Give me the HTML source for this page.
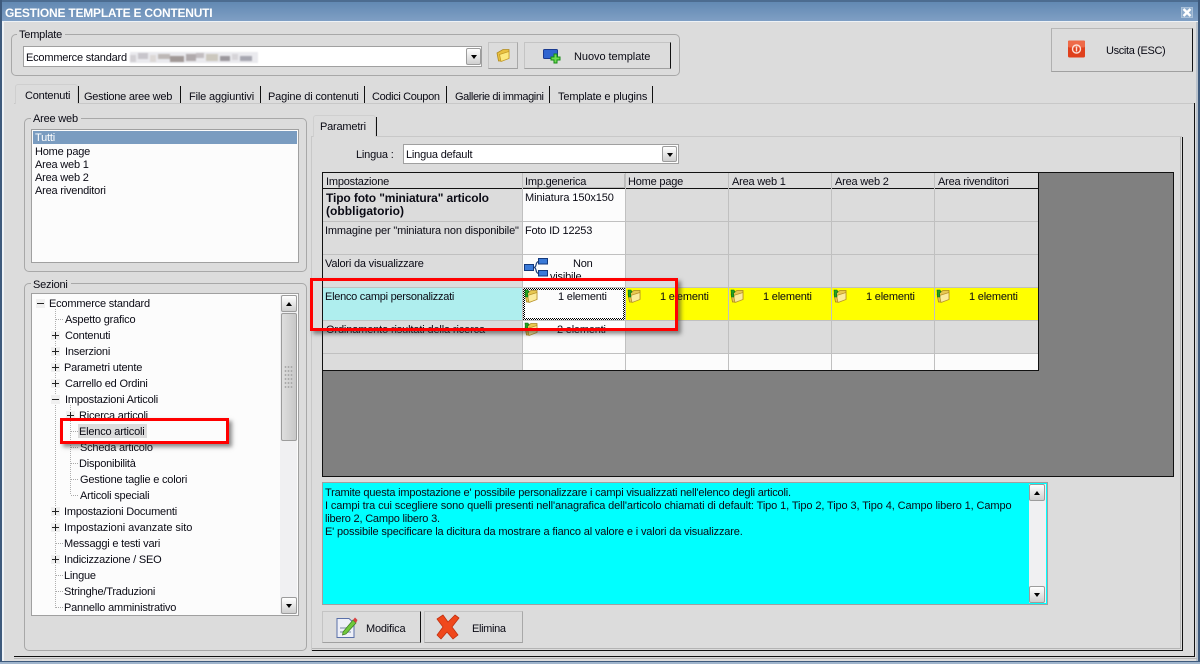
<!DOCTYPE html>
<html lang="it"><head><meta charset="utf-8"><title>Gestione template e contenuti</title>
<style>
*{box-sizing:border-box}
html,body{margin:0;padding:0;background:#dcdcdc}
#p{position:relative;width:1200px;height:664px;overflow:hidden;background:#dcdcdc;font:11px/13px "Liberation Sans",sans-serif;color:#0a0a14;letter-spacing:-.2px}
.a,.t,svg.i{position:absolute}
.t{white-space:nowrap;margin-top:1px}
.group{position:absolute;border:1px solid #a8a8a8;border-radius:5px}
.lab{position:absolute;background:#dcdcdc;padding:0 3px 0 2px;white-space:nowrap}
.box{position:absolute;background:#fcfcfc;border:1px solid #a0a0a0}
.sb{position:absolute;width:16px;height:17px;background:linear-gradient(#fff,#cfcfcf);border:1px solid #9c9c9c;border-radius:2px}
.up:after,.dn:after{content:"";position:absolute;left:4px;top:6px;border:3.5px solid transparent}
.up:after{border-bottom:4px solid #000;border-top:0}
.dn:after{border-top:4px solid #000;border-bottom:0}
.btn{position:absolute;background:#dcdcdc;border:1px solid;border-color:#c4c4c4 #a8a8a8 #a0a0a0 #c4c4c4}
.bk{border-right:1px solid #111}
.tabsep{position:absolute;width:1px;height:17px;top:86px;background:#111}
.hl{background:#c0c0c0;position:absolute}
.red{position:absolute;border:3px solid #f00;box-shadow:3px 3px 4px rgba(50,50,50,.55)}
.ln{position:absolute;background:repeating-linear-gradient(90deg,#a8a8a8 0 1px,transparent 1px 2px);height:1px}
.lv{position:absolute;background:repeating-linear-gradient(#b0b0b0 0 1px,transparent 1px 2px);width:1px}
.ex{position:absolute;width:9px;height:9px;background:#f0f0f0}
.ex:before{content:"";position:absolute;left:1px;top:4px;width:7px;height:1px;background:#222}
.ex.pl:after{content:"";position:absolute;left:4px;top:1px;width:1px;height:7px;background:#222}
</style></head><body>
<div id="p">
<svg width="0" height="0" style="position:absolute"><defs>
<symbol id="fo" viewBox="0 0 14 14"><path d="M1 5 L7 1.5 H13 V10 L6 13 H2.5 Z" fill="#e8c040" stroke="#b08a20" stroke-width=".8"/><path d="M3.5 6.5 L13 3.5 V10.5 L5 13.5 Z" fill="#fde97e" stroke="#c49a26" stroke-width=".8"/></symbol>
<symbol id="fg" viewBox="0 0 14 14"><path d="M1 5 L7 1.5 H13 V10 L6 13 H2.5 Z" fill="#e8c850" stroke="#a88420" stroke-width=".8"/><path d="M3.5 6.5 L13 3.5 V10.5 L5 13.5 Z" fill="#fbeb9c" stroke="#b8922a" stroke-width=".8"/><path d="M1 1 H4 L5 3 L3.5 4 L4 8 H1.5 Z" fill="#22a022" stroke="#0d6d0d" stroke-width=".6"/></symbol>
</defs></svg>

<!-- window frame -->
<div class="a" style="left:0;top:0;width:1200px;height:22px;background:linear-gradient(#6289b3,#7f9fc4);border-top:2px solid #4c6c90;border-bottom:1px solid #eef2f6"></div>
<div class="a" style="left:0;top:0;width:2px;height:664px;background:#3e5a7c"></div>
<div class="a" style="left:2px;top:22px;width:2px;height:640px;background:#eef2f6"></div>
<div class="a" style="left:1196px;top:22px;width:2px;height:640px;background:#b9c2cc"></div>
<div class="a" style="left:1198px;top:0;width:2px;height:664px;background:#3e5a7c"></div>
<div class="a" style="left:0;top:661px;width:1200px;height:1px;background:#3e5a7c"></div>
<div class="a" style="left:0;top:662px;width:1200px;height:2px;background:#9fb4cc"></div>
<div class="t" style="left:5px;top:5px;color:#fff;font:bold 12px/14px 'Liberation Sans',sans-serif;letter-spacing:-.22px">GESTIONE TEMPLATE E CONTENUTI</div>
<div class="a" style="left:1181px;top:7px;width:12px;height:11px;background:#8fadcd;border:1px solid #a9c0d8"></div>
<svg class="i" style="left:1182px;top:8px" width="10" height="9" viewBox="0 0 10 9"><path d="M1.5 1 L8.5 8 M8.5 1 L1.5 8" stroke="#fff" stroke-width="2.4"/></svg>

<!-- Template group -->
<div class="group" style="left:11px;top:34px;width:669px;height:42px"></div>
<div class="lab" style="left:17px;top:29px">Template</div>
<div class="box" style="left:23px;top:46px;width:459px;height:21px;background:#fff"></div>
<div class="t" style="left:26px;top:51px">Ecommerce standard</div>
<svg class="i" style="left:130px;top:52px;filter:blur(.7px)" width="128" height="11"><rect width="128" height="11" fill="#eaeaee"/><rect x="0" y="3" width="6" height="7" fill="#d2d0d4"/><rect x="8" y="1" width="10" height="6" fill="#c8c5cb"/><rect x="20" y="3" width="6" height="7" fill="#dcd8d6"/><rect x="28" y="2" width="12" height="5" fill="#bdb8b6"/><rect x="40" y="4" width="14" height="6" fill="#a09896"/><rect x="56" y="2" width="10" height="7" fill="#b0aaac"/><rect x="66" y="1" width="8" height="5" fill="#c2bdc0"/><rect x="76" y="2" width="12" height="7" fill="#ccc8be"/><rect x="90" y="4" width="10" height="5" fill="#9a979c"/><rect x="102" y="2" width="6" height="6" fill="#d6d4d8"/><rect x="110" y="4" width="12" height="5" fill="#a6a6b0"/></svg>
<div class="sb dn" style="left:466px;top:48px;width:15px;height:17px"></div>
<div class="btn" style="left:488px;top:42px;width:30px;height:27px"></div>
<svg class="i" style="left:496px;top:48px" width="14" height="14"><use href="#fo"/></svg>
<div class="btn bk" style="left:524px;top:42px;width:147px;height:27px"></div>
<svg class="i" style="left:543px;top:49px" width="20" height="15" viewBox="0 0 20 15"><rect x=".5" y=".5" width="14" height="9" rx="1" fill="#2f64d0" stroke="#1a3a90"/><path d="M11 5h3V8h3v3h-3v3h-3v-3H8V8h3z" fill="#6fdc50" stroke="#138a13"/></svg>
<div class="t" style="left:574px;top:50px;letter-spacing:-.05px">Nuovo template</div>

<div class="btn" style="left:1051px;top:28px;width:142px;height:44px;border-color:#b8b8b8 #111 #a0a0a0 #b0b0b0"></div>
<svg class="i" style="left:1068px;top:40px" width="18" height="18" viewBox="0 0 18 18"><rect width="17" height="17" y=".5" rx="1.5" fill="#e0401c"/><rect y=".5" width="17" height="7" rx="1.5" fill="#ee6a48"/><circle cx="8.5" cy="9" r="4" fill="none" stroke="#fbe0d8" stroke-width="1.4"/><path d="M8.5 6.5v5" stroke="#fbe0d8" stroke-width="1.4"/></svg>
<div class="t" style="left:1106px;top:44px;letter-spacing:-.35px">Uscita (ESC)</div>

<!-- Tabs -->
<div class="a" style="left:14px;top:103px;width:1181px;height:1px;background:#c8c8c8"></div>
<div class="a" style="left:15px;top:84px;width:63px;height:20px;background:#dcdcdc;border:1px solid #cfcfcf;border-bottom:0;border-radius:3px 3px 0 0"></div>
<div class="tabsep" style="left:78px"></div><div class="tabsep" style="left:180px"></div><div class="tabsep" style="left:260px"></div><div class="tabsep" style="left:364px"></div><div class="tabsep" style="left:446px"></div><div class="tabsep" style="left:549px"></div><div class="tabsep" style="left:652px"></div>
<div class="t" style="left:25px;top:89px">Contenuti</div>
<div class="t" style="left:84px;top:90px;letter-spacing:-.25px">Gestione aree web</div>
<div class="t" style="left:189px;top:90px;letter-spacing:-.15px">File aggiuntivi</div>
<div class="t" style="left:268px;top:90px;letter-spacing:-.15px">Pagine di contenuti</div>
<div class="t" style="left:372px;top:90px;letter-spacing:-.35px">Codici Coupon</div>
<div class="t" style="left:455px;top:90px;letter-spacing:-.4px">Gallerie di immagini</div>
<div class="t" style="left:558px;top:90px;letter-spacing:-.14px">Template e plugins</div>
<div class="a" style="left:1194px;top:103px;width:1px;height:553px;background:#111"></div>
<div class="a" style="left:14px;top:656px;width:1181px;height:1px;background:#111"></div>
<div class="a" style="left:14px;top:658px;width:1183px;height:1px;background:#b8b8b8"></div>

<!-- Aree web -->
<div class="group" style="left:24px;top:118px;width:283px;height:154px"></div>
<div class="lab" style="left:31px;top:113px">Aree web</div>
<div class="box" style="left:31px;top:129px;width:268px;height:134px"></div>
<div class="a" style="left:33px;top:131px;width:264px;height:13px;background:#7a9cc0"></div>
<div class="t" style="left:35px;top:131px;color:#fff">Tutti</div>
<div class="t" style="left:35px;top:145px">Home page</div>
<div class="t" style="left:35px;top:158px">Area web 1</div>
<div class="t" style="left:35px;top:171px">Area web 2</div>
<div class="t" style="left:35px;top:184px">Area rivenditori</div>

<!-- Sezioni -->
<div class="group" style="left:24px;top:283px;width:283px;height:368px"></div>
<div class="lab" style="left:31px;top:279px">Sezioni</div>
<div class="box" style="left:31px;top:293px;width:268px;height:323px"></div>
<div class="a" style="left:280px;top:295px;width:17px;height:319px;background:#f0f0f2"></div>
<div class="a" style="left:281px;top:313px;width:16px;height:128px;background:linear-gradient(90deg,#dedede,#c8c8c8);border:1px solid #9c9c9c;border-radius:2px"></div>
<div class="a" style="left:284px;top:365px;width:9px;height:23px;background:radial-gradient(circle,#aaa 1px,transparent 1px) 0 0/3px 4px"></div>
<div class="sb up" style="left:281px;top:295px"></div>
<div class="sb dn" style="left:281px;top:597px"></div>

<div class="lv" style="left:55px;top:309px;height:300px"></div>
<div class="lv" style="left:70px;top:405px;height:90px"></div>
<div class="ln" style="left:56px;top:319px;width:8px"></div><div class="ln" style="left:56px;top:543px;width:8px"></div><div class="ln" style="left:56px;top:575px;width:8px"></div><div class="ln" style="left:56px;top:591px;width:8px"></div><div class="ln" style="left:56px;top:607px;width:8px"></div>
<div class="ln" style="left:71px;top:431px;width:7px"></div><div class="ln" style="left:71px;top:447px;width:7px"></div><div class="ln" style="left:71px;top:463px;width:7px"></div><div class="ln" style="left:71px;top:479px;width:7px"></div><div class="ln" style="left:71px;top:495px;width:7px"></div>
<div class="ex" style="left:36px;top:299px"></div>
<div class="ex pl" style="left:51px;top:331px"></div>
<div class="ex pl" style="left:51px;top:347px"></div>
<div class="ex pl" style="left:51px;top:363px"></div>
<div class="ex pl" style="left:51px;top:379px"></div>
<div class="ex" style="left:51px;top:395px"></div>
<div class="ex pl" style="left:66px;top:411px"></div>
<div class="ex pl" style="left:51px;top:507px"></div>
<div class="ex pl" style="left:51px;top:523px"></div>
<div class="ex pl" style="left:51px;top:555px"></div>
<div class="a" style="left:78px;top:424px;width:69px;height:14px;background:#dcdcdc"></div>
<div class="t" style="left:49px;top:297px">Ecommerce standard</div>
<div class="t" style="left:65px;top:313px">Aspetto grafico</div>
<div class="t" style="left:65px;top:329px">Contenuti</div>
<div class="t" style="left:65px;top:345px">Inserzioni</div>
<div class="t" style="left:64px;top:361px">Parametri utente</div>
<div class="t" style="left:65px;top:377px">Carrello ed Ordini</div>
<div class="t" style="left:65px;top:393px">Impostazioni Articoli</div>
<div class="t" style="left:79px;top:409px">Ricerca articoli</div>
<div class="t" style="left:79px;top:425px">Elenco articoli</div>
<div class="t" style="left:80px;top:441px">Scheda articolo</div>
<div class="t" style="left:79px;top:457px">Disponibilità</div>
<div class="t" style="left:80px;top:473px">Gestione taglie e colori</div>
<div class="t" style="left:80px;top:489px">Articoli speciali</div>
<div class="t" style="left:64px;top:505px">Impostazioni Documenti</div>
<div class="t" style="left:64px;top:521px;letter-spacing:-.05px">Impostazioni avanzate sito</div>
<div class="t" style="left:64px;top:537px">Messaggi e testi vari</div>
<div class="t" style="left:64px;top:553px">Indicizzazione / SEO</div>
<div class="t" style="left:64px;top:569px">Lingue</div>
<div class="t" style="left:64px;top:585px">Stringhe/Traduzioni</div>
<div class="t" style="left:64px;top:601px">Pannello amministrativo</div>

<!-- Parametri panel -->
<div class="a" style="left:311px;top:136px;width:871px;height:1px;background:#c8c8c8"></div>
<div class="a" style="left:311px;top:136px;width:1px;height:515px;background:#c8c8c8"></div>
<div class="a" style="left:313px;top:115px;width:63px;height:22px;background:#dcdcdc;border:1px solid #cfcfcf;border-bottom:0;border-radius:3px 3px 0 0"></div>
<div class="a" style="left:376px;top:117px;width:1px;height:19px;background:#111"></div>
<div class="t" style="left:320px;top:120px">Parametri</div>
<div class="a" style="left:1182px;top:137px;width:1px;height:514px;background:#111"></div>
<div class="a" style="left:312px;top:650px;width:871px;height:1px;background:#111"></div>
<div class="a" style="left:1180px;top:137px;width:1px;height:512px;background:#b4b4b4"></div>
<div class="a" style="left:312px;top:648px;width:869px;height:1px;background:#b4b4b4"></div>

<div class="t" style="left:356px;top:148px">Lingua :</div>
<div class="box" style="left:403px;top:144px;width:276px;height:20px;background:#fff"></div>
<div class="t" style="left:406px;top:148px">Lingua default</div>
<div class="sb dn" style="left:662px;top:146px;width:15px;height:16px"></div>

<!-- Grid -->
<div class="a" style="left:322px;top:172px;width:852px;height:305px;background:#808080;border:1px solid #111"></div>
<div class="a" style="left:323px;top:173px;width:715px;height:197px;background:#dcdcdc"></div>
<div class="a" style="left:1038px;top:173px;width:1px;height:198px;background:#111"></div>
<div class="a" style="left:323px;top:370px;width:716px;height:1px;background:#111"></div>
<div class="a" style="left:323px;top:188px;width:715px;height:1px;background:#111"></div>
<!-- col1 white -->
<div class="a" style="left:523px;top:189px;width:102px;height:181px;background:#fcfcfc"></div>
<div class="a" style="left:626px;top:354px;width:412px;height:16px;background:#fcfcfc"></div>
<!-- highlight row -->
<div class="a" style="left:323px;top:288px;width:199px;height:32px;background:#afeeee"></div>
<div class="a" style="left:626px;top:288px;width:412px;height:32px;background:#ff0"></div>
<!-- lines -->
<div class="hl" style="left:323px;top:221px;width:715px;height:1px"></div>
<div class="hl" style="left:323px;top:254px;width:715px;height:1px"></div>
<div class="hl" style="left:323px;top:287px;width:715px;height:1px"></div>
<div class="hl" style="left:323px;top:320px;width:715px;height:1px"></div>
<div class="hl" style="left:323px;top:353px;width:715px;height:1px"></div>
<div class="hl" style="left:522px;top:173px;width:1px;height:197px"></div>
<div class="hl" style="left:625px;top:173px;width:1px;height:197px"></div>
<div class="hl" style="left:728px;top:173px;width:1px;height:197px"></div>
<div class="hl" style="left:831px;top:173px;width:1px;height:197px"></div>
<div class="hl" style="left:934px;top:173px;width:1px;height:197px"></div>
<div class="a" style="left:523px;top:174px;width:102px;height:14px;background:#dcdcdc;border-right:1px solid #bbb;border-bottom:1px solid #bbb"></div>
<div class="a" style="left:523px;top:288px;width:102px;height:32px;background:repeating-conic-gradient(#000 0 25%,#fff 0 50%) 0 0/2px 2px"></div>
<div class="a" style="left:525px;top:290px;width:98px;height:28px;background:#fcfcfc"></div>

<div class="t" style="left:326px;top:175px">Impostazione</div>
<div class="t" style="left:525px;top:175px">Imp.generica</div>
<div class="t" style="left:628px;top:175px">Home page</div>
<div class="t" style="left:732px;top:175px">Area web 1</div>
<div class="t" style="left:835px;top:175px">Area web 2</div>
<div class="t" style="left:938px;top:175px">Area rivenditori</div>
<div class="t" style="left:326px;top:191px;font-weight:bold;font-size:12px;letter-spacing:-.12px">Tipo foto "miniatura" articolo</div>
<div class="t" style="left:326px;top:204px;font-weight:bold;font-size:12px;letter-spacing:.05px">(obbligatorio)</div>
<div class="t" style="left:525px;top:191px;letter-spacing:-.1px">Miniatura 150x150</div>
<div class="t" style="left:325px;top:224px;letter-spacing:-.15px">Immagine per "miniatura non disponibile"</div>
<div class="t" style="left:525px;top:224px">Foto ID 12253</div>
<div class="t" style="left:325px;top:257px">Valori da visualizzare</div>
<svg class="i" style="left:524px;top:258px" width="24" height="19" viewBox="0 0 24 19"><path d="M10 9.5 C13 9.5 11 3.5 15 3.5 M10 9.5 C13 9.5 11 15.5 15 15.5" fill="none" stroke="#1c3e78" stroke-width="1.2"/><rect x=".5" y="6.5" width="9" height="6" fill="#3a7ad8" stroke="#14397c"/><rect x="14.5" y=".5" width="9" height="5.5" fill="#3a7ad8" stroke="#14397c"/><rect x="14.5" y="12.5" width="9" height="5.5" fill="#3a7ad8" stroke="#14397c"/></svg>
<div class="t" style="left:573px;top:257px">Non</div>
<div class="t" style="left:550px;top:270px">visibile</div>
<div class="t" style="left:325px;top:290px;letter-spacing:-.27px">Elenco campi personalizzati</div>
<div class="t" style="left:326px;top:323px;letter-spacing:-.14px">Ordinamento risultati della ricerca</div>
<svg class="i" style="left:524px;top:289px" width="14" height="14"><use href="#fg"/></svg>
<svg class="i" style="left:627px;top:289px" width="14" height="14"><use href="#fg"/></svg>
<svg class="i" style="left:730px;top:289px" width="14" height="14"><use href="#fg"/></svg>
<svg class="i" style="left:833px;top:289px" width="14" height="14"><use href="#fg"/></svg>
<svg class="i" style="left:936px;top:289px" width="14" height="14"><use href="#fg"/></svg>
<svg class="i" style="left:524px;top:322px" width="14" height="14"><use href="#fg"/></svg>
<div class="t" style="left:558px;top:290px">1 elementi</div>
<div class="t" style="left:660px;top:290px">1 elementi</div>
<div class="t" style="left:763px;top:290px">1 elementi</div>
<div class="t" style="left:866px;top:290px">1 elementi</div>
<div class="t" style="left:969px;top:290px">1 elementi</div>
<div class="t" style="left:557px;top:323px">2 elementi</div>

<!-- Info box -->
<div class="a" style="left:322px;top:482px;width:726px;height:123px;background:#0ff;border:1px solid #a0a0a0"></div>
<div class="t" style="left:325px;top:486px;letter-spacing:-.19px">Tramite questa impostazione e' possibile personalizzare i campi visualizzati nell'elenco degli articoli.</div>
<div class="t" style="left:325px;top:499px;letter-spacing:-.11px">I campi tra cui scegliere sono quelli presenti nell'anagrafica dell'articolo chiamati di default: Tipo 1, Tipo 2, Tipo 3, Tipo 4, Campo libero 1, Campo</div>
<div class="t" style="left:325px;top:512px">libero 2, Campo libero 3.</div>
<div class="t" style="left:325px;top:525px;letter-spacing:-.15px">E' possibile specificare la dicitura da mostrare a fianco al valore e i valori da visualizzare.</div>
<div class="a" style="left:1029px;top:484px;width:17px;height:119px;background:#f0f0f2"></div>
<div class="sb up" style="left:1029px;top:484px"></div>
<div class="sb dn" style="left:1029px;top:586px"></div>

<!-- Bottom buttons -->
<div class="btn bk" style="left:322px;top:611px;width:99px;height:32px"></div>
<svg class="i" style="left:336px;top:615px" width="22" height="24" viewBox="0 0 22 24"><path d="M1 3.5 H13 L18 8 V22.5 H1Z" fill="#eef0f8" stroke="#5a70a8"/><path d="M4 13h11M4 17h11" stroke="#b4bccf" stroke-width="2"/><path d="M7 17 L17 5 L20 8 L10 19 L6.5 20Z" fill="#6fc83c" stroke="#3a7a20" stroke-width=".7"/><path d="M17 5 L19 2.5 L21.5 5 L20 8Z" fill="#d84040"/></svg>
<div class="t" style="left:366px;top:622px">Modifica</div>
<div class="btn" style="left:424px;top:611px;width:99px;height:32px"></div>
<svg class="i" style="left:436px;top:614px" width="24" height="26" viewBox="0 0 24 26"><path d="M1 5 L7 1 L12 8 L19 1 L23 4 L16 13 L22 21 L17 25 L11 18 L5 25 L1 21 L7 13Z" fill="#f0481c" stroke="#c03010" stroke-width=".8" stroke-linejoin="round"/></svg>
<div class="t" style="left:472px;top:622px;letter-spacing:-.35px">Elimina</div>

<!-- Red annotations -->
<div class="red" style="left:310px;top:278px;width:368px;height:53px"></div>
<div class="red" style="left:60px;top:418px;width:169px;height:26px"></div>
</div>
</body></html>
